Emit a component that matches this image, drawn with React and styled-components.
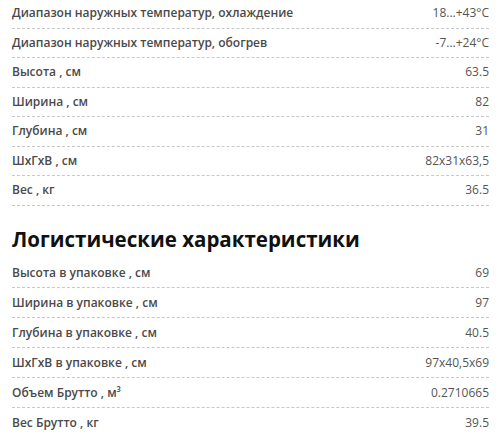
import React from 'react';
import styled, { createGlobalStyle } from 'styled-components';

const GlobalStyle = createGlobalStyle`
  body {
    margin: 0;
    background: #ffffff;
    font-family: "Open Sans", "Noto Sans", sans-serif;
  }
`;

const Page = styled.div`
  padding: 0 11px 0 12px;
  margin-top: -1px;
`;

const Table = styled.div`
  display: flex;
  flex-direction: column;
`;

const Row = styled.div`
  display: flex;
  justify-content: space-between;
  align-items: center;
  padding: 5px 0;
  line-height: ${(p) => (p.$roomy ? '19px' : '18.5px')};
  font-size: 12px;
  border-bottom: 1px dashed #c8c8c8;
`;

const Label = styled.span`
  font-weight: 600;
  color: #4a4a4a;
`;

const Value = styled.span`
  color: #555555;
`;

const Heading = styled.h2`
  margin: 18px 0 4px;
  font-size: 20.5px;
  font-weight: 700;
  line-height: 30px;
  color: #111111;
`;

const main = [
  ['Диапазон наружных температур, охлаждение', '18...+43°C'],
  ['Диапазон наружных температур, обогрев', '-7...+24°C'],
  ['Высота , см', '63.5'],
  ['Ширина , см', '82'],
  ['Глубина , см', '31'],
  ['ШхГхВ , см', '82x31x63,5'],
  ['Вес , кг', '36.5'],
];

const logistic = [
  ['Высота в упаковке , см', '69'],
  ['Ширина в упаковке , см', '97'],
  ['Глубина в упаковке , см', '40.5'],
  ['ШхГхВ в упаковке , см', '97x40,5x69'],
  ['Объем Брутто , м³', '0.2710665'],
  ['Вес Брутто , кг', '39.5'],
];

const Specs = ({ items, roomy }) => (
  <Table>
    {items.map(([label, value]) => (
      <Row key={label} $roomy={roomy}>
        <Label>{label}</Label>
        <Value>{value}</Value>
      </Row>
    ))}
  </Table>
);

const App = () => (
  <Page>
    <GlobalStyle />
    <Specs items={main} />
    <Heading>Логистические характеристики</Heading>
    <Specs items={logistic} roomy />
  </Page>
);

export default App;
